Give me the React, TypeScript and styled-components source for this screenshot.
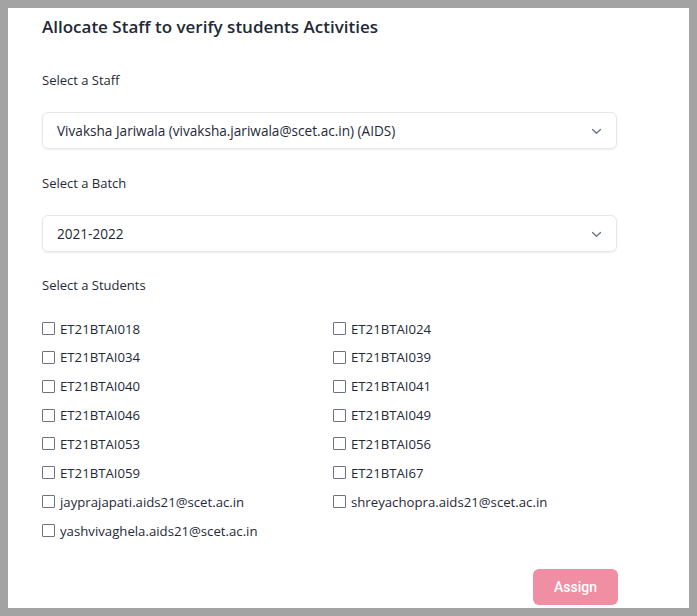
import * as React from "react";
import styled, { createGlobalStyle } from "styled-components";

const GlobalStyle = createGlobalStyle`
  html, body {
    margin: 0;
    padding: 0;
    background: #a3a3a3;
  }
  body {
    font-family: "Open Sans", "Noto Sans", sans-serif;
    color: #1f2937;
  }
`;

const SPage = styled.div`
  width: 697px;
  height: 616px;
  padding: 8px 8px 8px 8px;
  box-sizing: border-box;
`;

const SPanel = styled.div`
  width: 681px;
  height: 600px;
  background: #ffffff;
  box-sizing: border-box;
  padding: 5px 0 0 34px;
  overflow: hidden;
`;

const SForm = styled.div`
  width: 575px;
  display: flex;
  flex-direction: column;
`;

const STitle = styled.h2`
  margin: 0;
  font-size: 17px;
  line-height: 28px;
  font-weight: 600;
  color: #1f2937;
`;

const SLabel = styled.div<{ $top: number }>`
  margin-top: ${(p) => p.$top}px;
  font-size: 13px;
  line-height: 20px;
  color: #1f2937;
`;

const SSelectBox = styled.div`
  margin-top: 22px;
  height: 37px;
  box-sizing: border-box;
  border: 1px solid #e5e7eb;
  border-radius: 6px;
  box-shadow: 0 1px 2px rgba(0, 0, 0, 0.08);
  display: flex;
  align-items: center;
  justify-content: space-between;
  padding: 0 14px 0 14px;
  font-size: 13.6px;
  color: #1f2937;
`;

const SChevron = styled.svg`
  width: 12px;
  height: 12px;
  color: #6b7280;
`;

const SGrid = styled.div`
  margin-top: 23px;
  display: grid;
  grid-template-columns: 291px 1fr;
  row-gap: 7.86px;
`;

const SCheckItem = styled.label`
  display: flex;
  align-items: center;
  height: 21px;
  font-size: 13.2px;
  color: #1f2937;
`;

const SBox = styled.span`
  width: 13px;
  height: 13px;
  box-sizing: border-box;
  border: 1px solid #6b7280;
  border-radius: 1px;
  margin-right: 5px;
  flex-shrink: 0;
`;

const SFooter = styled.div`
  margin-top: 28px;
  display: flex;
  justify-content: flex-end;
`;

const SButton = styled.button`
  width: 85px;
  height: 36px;
  border: none;
  border-radius: 6px;
  background: #f08fa3;
  color: #ffffff;
  font-family: Roboto, "Open Sans", sans-serif;
  font-size: 14px;
  font-weight: 500;
  margin-right: -1px;
`;

const students = [
  "ET21BTAI018",
  "ET21BTAI024",
  "ET21BTAI034",
  "ET21BTAI039",
  "ET21BTAI040",
  "ET21BTAI041",
  "ET21BTAI046",
  "ET21BTAI049",
  "ET21BTAI053",
  "ET21BTAI056",
  "ET21BTAI059",
  "ET21BTAI67",
  "jayprajapati.aids21@scet.ac.in",
  "shreyachopra.aids21@scet.ac.in",
  "yashvivaghela.aids21@scet.ac.in",
];

const Select = ({ value }: { value: string }) => (
  <SSelectBox>
    <span>{value}</span>
    <SChevron viewBox="0 0 12 12" fill="none">
      <path d="M2.5 4.5L6.5 8.3L10.5 4.5" stroke="currentColor" strokeWidth="1.3" strokeLinecap="round" strokeLinejoin="round" />
    </SChevron>
  </SSelectBox>
);

const App = () => {
  return (
    <SPage>
      <GlobalStyle />
      <SPanel>
        <SForm>
          <STitle>Allocate Staff to verify students Activities</STitle>
          <SLabel $top={29}>Select a Staff</SLabel>
          <Select value="Vivaksha Jariwala (vivaksha.jariwala@scet.ac.in) (AIDS)" />
          <SLabel $top={24}>Select a Batch</SLabel>
          <Select value="2021-2022" />
          <SLabel $top={23}>Select a Students</SLabel>
          <SGrid>
            {students.map((s) => (
              <SCheckItem key={s}>
                <SBox />
                {s}
              </SCheckItem>
            ))}
          </SGrid>
          <SFooter>
            <SButton>Assign</SButton>
          </SFooter>
        </SForm>
      </SPanel>
    </SPage>
  );
};

export default App;
